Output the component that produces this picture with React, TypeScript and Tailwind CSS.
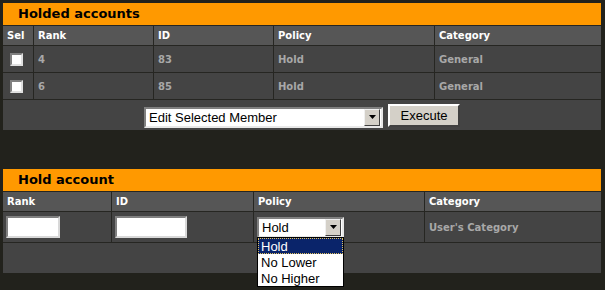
import type { ReactNode } from "react";

const verdana = "font-['DejaVu_Sans',Verdana,sans-serif]";
const arial = "font-['Liberation_Sans',Arial,sans-serif]";

const Checkbox = () => (
	<div className="h-[13px] w-[13px] border-2 border-t-[#808080] border-l-[#808080] border-r-[#e0e0e0] border-b-[#e0e0e0] bg-white" />
);

const ArrowButton = () => (
	<div className="flex h-[17px] w-[16px] items-center justify-center border border-t-[#f0f0f0] border-l-[#f0f0f0] border-r-[#404040] border-b-[#404040] bg-[#d4d0c8]">
		<svg width="7" height="4" viewBox="0 0 7 4" aria-hidden={true}>
			<path d="M0 0h7L3.5 4z" fill="#000" />
		</svg>
	</div>
);

const Select = ({ value, width }: { value: string; width: string }) => (
	<div
		className={`flex h-[21px] items-center justify-between border-2 border-t-[#808080] border-l-[#808080] border-r-[#e8e8e8] border-b-[#e8e8e8] bg-white pl-[3px] pr-px ${width}`}
	>
		<span className={`${arial} text-[13px] leading-none text-black`}>{value}</span>
		<ArrowButton />
	</div>
);

const TextInput = ({ width }: { width: string }) => (
	<div className={`h-[22px] border-2 border-t-[#808080] border-l-[#808080] border-r-[#d8d8d8] border-b-[#d8d8d8] bg-white ${width}`} />
);

const Title = ({ children }: { children: ReactNode }) => (
	<div className={`flex h-[22px] items-center bg-[#ff9900] pl-[15px] ${verdana} text-[13px] font-bold text-black`}>
		{children}
	</div>
);

const Head = ({ w, children }: { w: string; children: ReactNode }) => (
	<div className={`flex items-center bg-[#565656] pl-[4px] ${w} ${verdana} text-[10px] font-bold text-white`}>
		{children}
	</div>
);

const Cell = ({ w, children }: { w: string; children?: ReactNode }) => (
	<div className={`flex items-center bg-[#444444] pl-[4px] ${w} ${verdana} text-[10px] font-bold text-[#a8a8a8]`}>
		{children}
	</div>
);

const held = [
	{ rank: "4", id: "83", policy: "Hold", category: "General" },
	{ rank: "6", id: "85", policy: "Hold", category: "General" },
];

export default function App() {
	return (
		<div className="h-[290px] w-[605px] overflow-hidden bg-[#22221c] pt-[3px] pl-[3px]">
			{/* Holded accounts */}
			<div className="flex w-[598px] flex-col gap-px bg-[#262622]">
				<Title>Holded accounts</Title>
				<div className="flex h-[19px] gap-px">
					<Head w="w-[30px]">Sel</Head>
					<Head w="w-[119px]">Rank</Head>
					<Head w="w-[119px]">ID</Head>
					<Head w="w-[160px]">Policy</Head>
					<Head w="w-[166px]">Category</Head>
				</div>
				{held.map((row) => (
					<div key={row.id} className="flex h-[26px] gap-px">
						<div className="flex w-[30px] items-center bg-[#444444] pl-[7px]">
							<Checkbox />
						</div>
						<Cell w="w-[119px]">{row.rank}</Cell>
						<Cell w="w-[119px]">{row.id}</Cell>
						<Cell w="w-[160px]">{row.policy}</Cell>
						<Cell w="w-[166px]">{row.category}</Cell>
					</div>
				))}
				<div className="flex h-[30px] items-center justify-center gap-[5px] bg-[#444444] pt-[1px]">
					<div className="pt-[3px]">
						<Select value="Edit Selected Member" width="w-[239px]" />
					</div>
					<button
						type="button"
						className={`h-[23px] w-[72px] border-2 border-t-white border-l-white border-r-[#404040] border-b-[#404040] bg-[#d4d0c8] ${arial} text-[13px] leading-none text-black`}
					>
						Execute
					</button>
				</div>
			</div>

			{/* Hold account */}
			<div className="mt-[39px] flex w-[598px] flex-col gap-px bg-[#262622]">
				<Title>Hold account</Title>
				<div className="flex h-[19px] gap-px">
					<Head w="w-[108px]">Rank</Head>
					<Head w="w-[141px]">ID</Head>
					<Head w="w-[170px]">Policy</Head>
					<Head w="w-[176px]">Category</Head>
				</div>
				<div className="flex h-[30px] gap-px">
					<div className="flex w-[108px] items-center bg-[#444444] pl-[3px]">
						<TextInput width="w-[54px]" />
					</div>
					<div className="flex w-[141px] items-center bg-[#444444] pl-[3px]">
						<TextInput width="w-[72px]" />
					</div>
					<div className="relative flex w-[170px] items-center bg-[#444444] pl-[3px]">
						<Select value="Hold" width="w-[87px]" />
						<div className={`absolute top-[25px] left-[3px] z-10 flex w-[87px] flex-col border border-black bg-white ${arial} text-[13px] leading-none text-black`}>
							<div className="flex h-[16px] items-center border border-dotted border-[#e0c060] bg-[#0a246a] pl-[2px] text-white">
								Hold
							</div>
							<div className="flex h-[16px] items-center pl-[3px]">No Lower</div>
							<div className="flex h-[16px] items-center pl-[3px]">No Higher</div>
						</div>
					</div>
					<Cell w="w-[176px]">User's Category</Cell>
				</div>
				<div className="h-[30px] bg-[#444444]" />
			</div>
		</div>
	);
}
